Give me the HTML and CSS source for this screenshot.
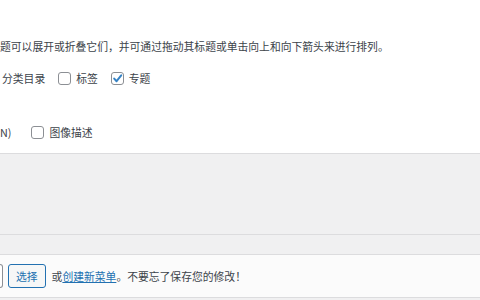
FILE: index.html
```html
<!DOCTYPE html>
<html>
<head>
    <title>菜单</title>
    <link rel="stylesheet" href="styles.css">
</head>
<body>
    <div class="screen-meta">
        <p class="desc">题可以展开或折叠它们，并可通过拖动其标题或单击向上和向下箭头来进行排列。</p>
        <div class="options">
            <span class="opt">分类目录</span>
            <label class="opt"><span class="box"></span>标签</label>
            <label class="opt"><span class="box checked"><svg viewBox="0 0 13 13" width="13" height="13"><path d="M3.2 6.6 L5.6 9.2 L10.2 3.4" fill="none" stroke="#3582c4" stroke-width="2" stroke-linecap="round" stroke-linejoin="round"/></svg></span>专题</label>
        </div>
        <div class="options row-adv">
            <span class="opt cut">N)</span>
            <label class="opt"><span class="box"></span>图像描述</label>
        </div>
    </div>

    <div class="gap-area"></div>
    <div class="tab-band"></div>

    <div class="manage-menus">
        <span class="select-edge"></span>
        <button class="btn">选择</button>
        <span class="hint">或<a href="#">创建新菜单</a>。不要忘了保存您的修改！</span>
    </div>
</body>
</html>
```

FILE: styles.css
```css
body { margin: 0; background: #f0f0f1; color: #3c434a; font-family: "Noto Sans CJK SC", "Noto Sans", sans-serif; font-size: 10.8px; line-height: 16px; overflow: hidden; }
.screen-meta { background: #fff; border-bottom: 1px solid #dcdcde; height: 153px; overflow: hidden; }
.desc { margin: 38px 0 0 0; white-space: nowrap; }
.options { display: flex; align-items: center; margin-top: 16px; padding-left: 2px; white-space: nowrap; }
.row-adv { margin-top: 38px; padding-left: 0; }
.opt { display: flex; align-items: center; margin-right: 13px; }
.cut { margin-right: 20px; }
.box { display: inline-block; width: 11px; height: 11px; border: 1px solid #8c8f94; border-radius: 3px; margin-right: 5px; background: #fff; position: relative; }
.box svg { position: absolute; left: -1px; top: -1px; }
.gap-area { height: 80px; }
.tab-band { height: 19px; border-top: 1px solid #dcdcde; border-bottom: 1px solid #dcdcde; }
.manage-menus { display: flex; align-items: center; padding: 9px 0; background: #fbfbfb; border-bottom: 1px solid #dcdcde; white-space: nowrap; }
.select-edge { width: 2px; height: 22px; border: 1px solid #8c8f94; border-left: none; border-radius: 0 3px 3px 0; background: #fff; margin-right: 4px; }
.btn { height: 24px; padding: 0 7px; border: 1px solid #2271b1; border-radius: 3px; background: #f6f7f7; color: #2271b1; font-family: inherit; font-size: 10.8px; line-height: 22px; margin-left: 1px; }
.hint { margin-left: 6px; }
.hint a { color: #2271b1; text-decoration: underline; }
```
